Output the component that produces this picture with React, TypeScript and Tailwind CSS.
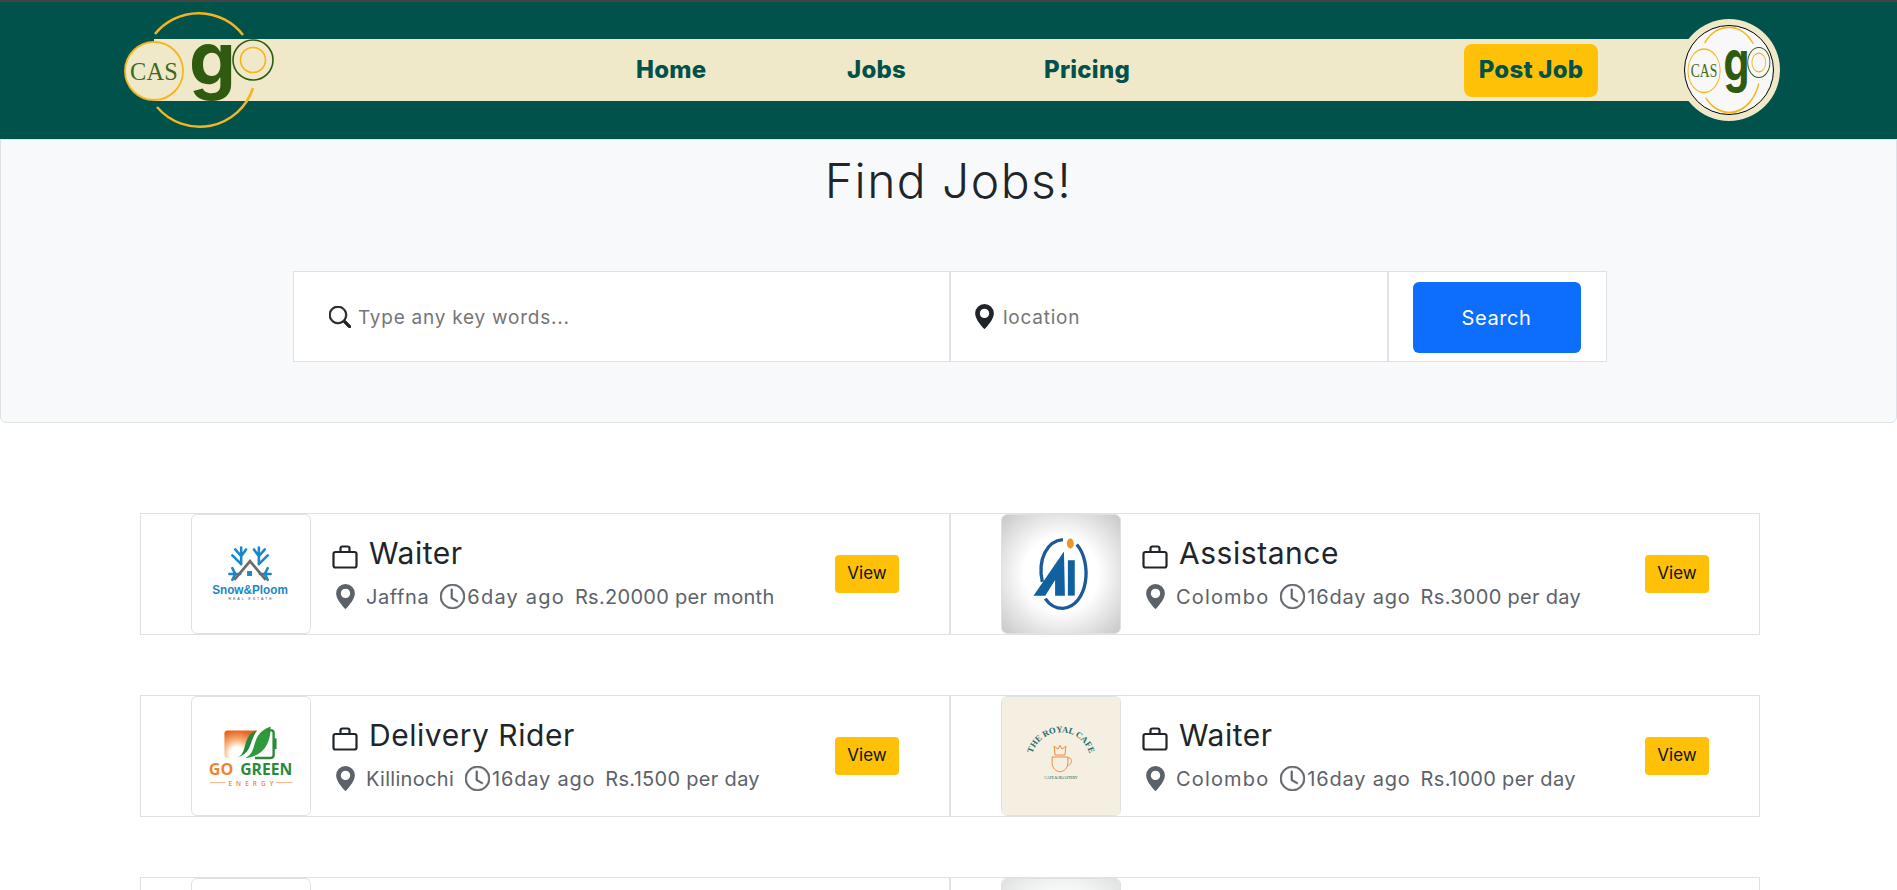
import React from 'react';
import { BsClock, BsGeoAltFill, BsSearch } from 'react-icons/bs';

const poppins = { fontFamily: 'Inter, "Noto Sans", sans-serif' };

// the casgo mark, drawn in the nav's own pixels (150x112 box)
const CasgoMark = ({ className, squash }: { className?: string; squash?: boolean }) => (
  <svg viewBox="0 0 150 112" preserveAspectRatio={squash ? 'none' : 'xMidYMid meet'} className={className}>
    <path d="M30 20 A56 56 0 0 1 118 21" fill="none" stroke="#f5b51e" strokeWidth="2.5" />
    <path d="M32 93 A56 56 0 0 0 128 74" fill="none" stroke="#f5b51e" strokeWidth="2.5" />
    <circle cx="29" cy="57" r="29" fill={squash ? 'none' : '#f0e9c9'} stroke="#f5b51e" strokeWidth="1.8" />
    <text x="29" y="66" textAnchor="middle" fontSize="26" fontWeight="400" fill="#3b6a1d" textLength="48" lengthAdjust="spacingAndGlyphs" style={{ fontFamily: '"Liberation Serif", serif' }}>
      CAS
    </text>
    <text x="64" y="71" fontSize="74" fontWeight="700" fill="#2f5a0f" style={{ fontFamily: 'Inter, sans-serif' }}>
      g
    </text>
    <circle cx="128" cy="46" r="20" fill="none" stroke="#2f5a0f" strokeWidth="1.6" />
    <circle cx="128" cy="46" r="12.5" fill="none" stroke="#f5b51e" strokeWidth="1.6" />
  </svg>
);

const CaseIcon = () => (
  <svg viewBox="0 0 26 24" className="h-[24px] w-[26px] shrink-0" fill="none" stroke="#212529" strokeWidth="2.2">
    <rect x="1.5" y="7" width="23" height="15.5" rx="2" />
    <path d="M8.5 7 V3.5 a2 2 0 0 1 2-2 h5 a2 2 0 0 1 2 2 V7" />
  </svg>
);

const SnowLogo = () => (
  <svg viewBox="0 0 120 120" className="h-full w-full">
    <g stroke="#1a87c9" strokeWidth="2.6" fill="none" strokeLinecap="round">
      <path d="M50 33 L50 50 M44 35 L50 42 L55 35 M41 41 L50 50" />
      <path d="M68 33 L68 50 M63 35 L68 42 L74 35 M77 41 L68 50" />
      <path d="M38 60 L49 60 M41 54 L44 60 L41 66" />
      <path d="M80 60 L69 60 M77 54 L74 60 L77 66" />
    </g>
    <path d="M43 66 L59 47 L75 66" fill="none" stroke="#6b6b6b" strokeWidth="2.8" />
    <rect x="56" y="57" width="5" height="5" fill="#1a87c9" />
    <text x="59" y="80" textAnchor="middle" fontSize="13" fontWeight="700" fill="#1a87c9" textLength="77" lengthAdjust="spacingAndGlyphs" style={{ fontFamily: '"Liberation Sans", sans-serif' }}>
      Snow&amp;Ploom
    </text>
    <text x="59" y="86" textAnchor="middle" fontSize="3.8" fill="#555" textLength="44" style={{ fontFamily: '"Liberation Sans", sans-serif' }}>
      REAL ESTATE
    </text>
  </svg>
);

const AiLogo = () => (
  <svg viewBox="0 0 120 120" className="h-full w-full">
    <defs>
      <radialGradient id="ai-bg" cx="50%" cy="50%" r="70%">
        <stop offset="45%" stopColor="#ffffff" />
        <stop offset="100%" stopColor="#c8c8c8" />
      </radialGradient>
    </defs>
    <rect width="120" height="120" fill="url(#ai-bg)" />
    <path d="M41 68 C36 45 46 26 62 25 M76 30 C92 48 88 92 62 95 C54 95 48 91 44 85" fill="none" stroke="#1c5a99" strokeWidth="3.4" />
    <polygon points="32,82 63,37 64,82 54,82 54,66 44,82" fill="#11609f" />
    <rect x="67" y="46" width="7" height="36" fill="#11609f" />
    <ellipse cx="69.5" cy="29" rx="3.5" ry="5" fill="#f0932b" />
  </svg>
);

const GreenLogo = () => (
  <svg viewBox="0 0 120 120" className="h-full w-full">
    <defs>
      <radialGradient id="gg-sun" gradientUnits="userSpaceOnUse" cx="46" cy="58" r="24">
        <stop offset="30%" stopColor="#ffffff" />
        <stop offset="60%" stopColor="#f7b27a" />
        <stop offset="100%" stopColor="#e8641f" />
      </radialGradient>
    </defs>
    <path d="M36 34 L66 34 L50 62 L36 62 Q33 62 33 59 L33 37 Q33 34 36 34 Z" fill="url(#gg-sun)" />
    <path d="M44 62 C58 60 50 38 66 34 C58 44 62 58 44 62 Z" fill="#1f8a3a" />
    <path d="M54 62 C68 56 58 38 80 30 C80 46 74 60 54 62 Z" fill="#2f9a3c" />
    <path d="M77 34 L81 34 Q83 34 83 37 L83 59 Q83 62 80 62 L64 62" fill="none" stroke="#2c8a37" strokeWidth="2.4" />
    <rect x="83" y="42" width="3" height="11" fill="#2c8a37" />
    <text x="17" y="79" fontSize="15.5" fontWeight="700" fill="#ee8430" textLength="25" lengthAdjust="spacingAndGlyphs" style={{ fontFamily: '"Open Sans", sans-serif' }}>
      GO
    </text>
    <text x="49" y="79" fontSize="15.5" fontWeight="700" fill="#2c8a37" textLength="53" lengthAdjust="spacingAndGlyphs" style={{ fontFamily: '"Open Sans", sans-serif' }}>
      GREEN
    </text>
    <path d="M18 87 L34 87 M85 87 L102 87" stroke="#f3a064" strokeWidth="0.8" />
    <text x="60" y="90" textAnchor="middle" fontSize="6.5" fontWeight="600" fill="#ee8430" textLength="46" style={{ fontFamily: '"Open Sans", sans-serif' }}>
      ENERGY
    </text>
  </svg>
);

const CafeLogo = () => (
  <svg viewBox="0 0 120 120" className="h-full w-full">
    <rect width="120" height="120" fill="#f5efe2" />
    <defs>
      <path id="cafe-arc" d="M30 65 A30 29 0 0 1 90 65" />
    </defs>
    <text fontSize="8.8" fontWeight="700" fill="#1f6a62" style={{ fontFamily: '"Liberation Serif", serif' }}>
      <textPath href="#cafe-arc" startOffset="50%" textAnchor="middle">
        THE ROYAL CAFE
      </textPath>
    </text>
    <path d="M54 59 L53 50 L57 53 L59 49 L61 53 L65 50 L64 59 Z" fill="none" stroke="#ee8a3c" strokeWidth="1" />
    <path d="M51 61 L67 61 L67 67 C67 72 63 76 59 76 C55 76 51 72 51 67 Z M67 62 C72 61 72 69 66 70" fill="none" stroke="#ee8a3c" strokeWidth="1" />
    <text x="60" y="83" textAnchor="middle" fontSize="4.2" fill="#1f6a62" textLength="34" style={{ fontFamily: '"Liberation Serif", serif' }}>
      CAFE &amp; ROASTERY
    </text>
  </svg>
);

const GreyLogo = () => (
  <svg viewBox="0 0 120 120" className="h-full w-full">
    <defs>
      <radialGradient id="grey-bg" cx="50%" cy="50%" r="70%">
        <stop offset="45%" stopColor="#ffffff" />
        <stop offset="100%" stopColor="#dfe1e1" />
      </radialGradient>
    </defs>
    <rect width="120" height="120" fill="url(#grey-bg)" />
  </svg>
);

const jobs = [
  { title: 'Waiter', place: 'Jaffna', placeClass: 'ml-[8px] tracking-[0.03em]', time: '6day ago', timeClass: 'ml-[2px] tracking-[0.06em]', pay: 'Rs.20000 per month', logo: <SnowLogo /> },
  { title: 'Assistance', place: 'Colombo', placeClass: 'ml-[8px] tracking-[0.058em]', time: '16day ago', timeClass: 'ml-[2px] tracking-[0.04em]', pay: 'Rs.3000 per day', logo: <AiLogo /> },
  { title: 'Delivery Rider', place: 'Killinochi', placeClass: 'ml-[8px] tracking-[0.015em]', time: '16day ago', timeClass: 'ml-[2px] tracking-[0.04em]', pay: 'Rs.1500 per day', logo: <GreenLogo /> },
  { title: 'Waiter', place: 'Colombo', placeClass: 'ml-[8px] tracking-[0.058em]', time: '16day ago', timeClass: 'ml-[2px] tracking-[0.04em]', pay: 'Rs.1000 per day', logo: <CafeLogo /> },
];

const JobCard = ({ job }: { job: (typeof jobs)[number] }) => (
  <div className="flex h-[122px] items-center border border-[#dee2e6] bg-white pl-[50px] pr-[50px]">
    <div className="h-[120px] w-[120px] shrink-0 overflow-hidden rounded-md border border-[#dee2e6]">{job.logo}</div>
    <div className="ml-[21px] flex-1 pb-[3px]">
      <div className="flex items-center text-[#212529]">
        <CaseIcon />
        <span className="ml-[11px] pb-[8px] text-[30px] leading-[36px] tracking-[0.018em]">{job.title}</span>
      </div>
      <div className="mt-[4px] flex items-center text-[20px] leading-[28px] text-[#5c6269]">
        <BsGeoAltFill className="ml-[1px] h-[25px] w-[25px]" />
        <span className={job.placeClass}>{job.place}</span>
        <BsClock className="ml-[11px] h-[25px] w-[25px]" stroke="currentColor" strokeWidth="0.35" />
        <span className={job.timeClass}>{job.time}</span>
        <span className="ml-[10px] tracking-[0.015em]">{job.pay}</span>
      </div>
    </div>
    <button className="h-[38px] w-[64px] rounded bg-[#ffc107] text-[17px] text-[#111111]">View</button>
  </div>
);

const EmptyCard = ({ logo }: { logo: React.ReactNode }) => (
  <div className="flex h-[122px] items-center border border-[#dee2e6] bg-white pl-[50px]">
    <div className="h-[120px] w-[120px] overflow-hidden rounded-md border border-[#dee2e6]">{logo}</div>
  </div>
);

export default function App() {
  return (
    <div className="h-[890px] overflow-hidden bg-white" style={poppins}>
      <div className="h-[2px] bg-[#444444]" />
      <nav className="flex h-[137px] items-center bg-[#00524a] pb-[1px] pl-[154px] pr-[117px]">
        <div className="flex h-[62px] flex-1 items-center bg-[#f0e9c9] text-[24px] font-extrabold tracking-[0.01em] text-[#00524a]">
          <CasgoMark className="-ml-[29px] h-[112px] w-[150px] shrink-0 overflow-visible" />
          <a className="ml-[361px] w-[211px]">Home</a>
          <a className="w-[197px]">Jobs</a>
          <a className="w-[420px]">Pricing</a>
          <button className="h-[53px] w-[134px] rounded-lg bg-[#ffc107] text-[24px] font-extrabold text-[#00524a]">Post Job</button>
        </div>
        <div className="-ml-[12px] flex h-[102px] w-[102px] items-center justify-center rounded-full bg-[#f0e9c9]">
          <div className="flex h-[90px] w-[90px] items-center justify-center rounded-full border border-black bg-[#f8f8f8]">
            <CasgoMark squash className="h-[84px] w-[83px] overflow-visible" />
          </div>
        </div>
      </nav>

      <section className="h-[284px] rounded-b-md border border-[#dee2e6] bg-[#f8f9fa]">
        <h1 className="pt-[5px] text-center text-[48px] font-light leading-[72px] tracking-[0.03em] text-[#212529]">Find Jobs!</h1>
        <div className="ml-[292px] mt-[54px] flex h-[91px] w-[1314px] items-center border border-[#dee2e6] bg-white text-[19px]">
          <div className="flex h-full w-[655px] items-center pl-[35px]">
            <BsSearch className="h-[22px] w-[22px] text-[#212529]" stroke="currentColor" strokeWidth="0.6" />
            <input placeholder="Type any key words..." className="ml-[7px] flex-1 pt-[3px] tracking-[0.04em] outline-none placeholder:text-[#757575]" />
          </div>
          <div className="flex h-full w-[440px] items-center border-x-2 border-[#dee2e6] pl-[21px]">
            <BsGeoAltFill className="h-[25px] w-[25px] text-[#212529]" />
            <input placeholder="location" className="ml-[6px] flex-1 pt-[3px] tracking-[0.04em] outline-none placeholder:text-[#757575]" />
          </div>
          <div className="flex flex-1 justify-center pr-[2px] pt-[1px]">
            <button className="h-[71px] w-[168px] rounded-md bg-[#0d6efd] pt-[1px] text-[20px] tracking-[0.03em] text-white">Search</button>
          </div>
        </div>
      </section>

      <main className="mt-[90px] grid w-[1760px] grid-cols-2 gap-y-[60px] pl-[140px]">
        {jobs.map((job, i) => (
          <JobCard key={i} job={job} />
        ))}
        <EmptyCard logo={null} />
        <EmptyCard logo={<GreyLogo />} />
      </main>
    </div>
  );
}
